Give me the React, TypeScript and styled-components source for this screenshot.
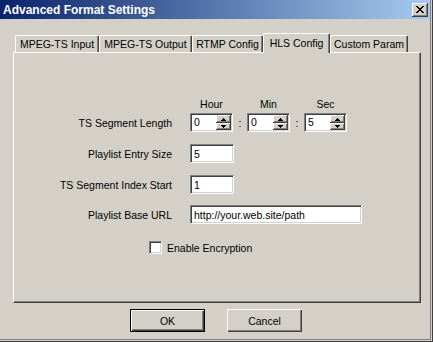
import React from 'react';
import styled, { createGlobalStyle, css } from 'styled-components';

const Global = createGlobalStyle`
  html, body { margin: 0; padding: 0; background: #d4d0c8; }
  body {
    font-family: "Liberation Sans", Arial, sans-serif;
    font-size: 10.5px;
    color: #000;
  }
  * { box-sizing: border-box; }
`;

const sunken = css`
  border: 1px solid;
  border-color: #808080 #ffffff #ffffff #808080;
  box-shadow: inset 1px 1px 0 #404040, inset -1px -1px 0 #d4d0c8;
`;

const raised = css`
  box-shadow: inset -1px -1px 0 #404040, inset 1px 1px 0 #ffffff, inset -2px -2px 0 #808080;
`;

const Window = styled.div`
  width: 433px;
  height: 342px;
  background: #d4d0c8;
  display: flex;
  flex-direction: column;
  overflow: hidden;
  box-shadow: inset -1px -1px 0 #404040, inset -2px -2px 0 #d4d0c8, inset -3px -3px 0 #808080;
`;

const TitleBar = styled.div`
  height: 19px;
  margin-right: 3px;
  background: linear-gradient(to right, #0a246a, #a6caf0);
  display: flex;
  align-items: center;
  justify-content: space-between;
  padding: 0 2px 0 3px;
`;

const TitleText = styled.span`
  color: #fff;
  font-weight: bold;
  font-size: 12px;
  font-family: "Liberation Sans", Arial, sans-serif;
  white-space: nowrap;
`;

const CloseButton = styled.div`
  width: 16px;
  height: 14px;
  background: #d4d0c8;
  ${raised};
  display: flex;
  align-items: center;
  justify-content: center;
  padding-bottom: 1px;
`;

const Content = styled.div`
  padding: 14px 0 0 13px;
`;

const TabStrip = styled.div`
  display: flex;
  align-items: flex-end;
  height: 19px;
  padding-left: 2px;
`;

const Tab = styled.div<{ $w: number; $active?: boolean }>`
  width: ${p => p.$w}px;
  height: ${p => (p.$active ? 20 : 17)}px;
  margin-bottom: ${p => (p.$active ? -1 : 0)}px;
  position: relative;
  z-index: ${p => (p.$active ? 2 : 1)};
  background: #d4d0c8;
  border-top: 1px solid #fff;
  border-left: 1px solid #fff;
  border-right: 1px solid #404040;
  border-top-left-radius: 2px;
  border-top-right-radius: 2px;
  box-shadow: inset -1px 0 0 #808080;
  display: flex;
  align-items: center;
  justify-content: center;
  white-space: nowrap;
  padding-bottom: ${p => (p.$active ? 2 : 0)}px;
`;

const Panel = styled.div`
  width: 408px;
  height: 251px;
  border-left: 1px solid #fff;
  border-top: 1px solid #fff;
  border-right: 1px solid #404040;
  border-bottom: 1px solid #404040;
  box-shadow: inset -1px -1px 0 #808080;
  padding-top: 44px;
  display: flex;
  flex-direction: column;
`;

const UnitsRow = styled.div`
  display: flex;
  height: 13px;
  align-items: center;
  margin-left: 176px;
`;

const Unit = styled.div`
  width: 43px;
  text-align: center;
`;

const Sep = styled.div`
  width: 14px;
  text-align: center;
`;

const Row = styled.div<{ $top: number }>`
  display: flex;
  align-items: center;
  height: 19px;
  margin-top: ${p => p.$top}px;
`;

const Label = styled.div`
  width: 158px;
  margin-right: 18px;
  text-align: right;
  white-space: nowrap;
`;

const Spinner = styled.div`
  width: 43px;
  height: 19px;
  background: #fff;
  ${sunken};
  display: flex;
  padding: 1px;
`;

const SpinText = styled.div`
  flex: 1;
  padding-left: 2px;
  line-height: 15px;
`;

const UpDown = styled.div`
  width: 15px;
  display: flex;
  flex-direction: column;
`;

const SpinBtn = styled.div<{ $h: number }>`
  height: ${p => p.$h}px;
  background: #d4d0c8;
  ${raised};
  display: flex;
  align-items: center;
  justify-content: center;
`;

const TextField = styled.input<{ $w: number }>`
  width: ${p => p.$w}px;
  height: 19px;
  ${sunken};
  background: #fff;
  font: inherit;
  color: #000;
  padding: 0 3px;
  outline: none;
  margin: 0;
`;

const CheckRow = styled.label`
  display: flex;
  align-items: center;
  height: 13px;
  margin-top: 17px;
  margin-left: 135px;
`;

const CheckBox = styled.span`
  width: 13px;
  height: 13px;
  background: #fff;
  ${sunken};
  margin-right: 5px;
`;

const ButtonRow = styled.div`
  width: 432px;
  display: flex;
  justify-content: center;
  gap: 22px;
  margin-top: 6px;
`;

const Button = styled.div<{ $default?: boolean }>`
  width: 75px;
  height: 23px;
  background: #d4d0c8;
  display: flex;
  align-items: center;
  justify-content: center;
  ${p =>
    p.$default
      ? css`
          border: 1px solid #000;
          box-shadow: inset 1px 1px 0 #fff, inset -1px -1px 0 #404040, inset -2px -2px 0 #808080;
        `
      : css`
          box-shadow: inset 1px 1px 0 #fff, inset -1px -1px 0 #404040, inset -2px -2px 0 #808080;
        `}
`;

const Arrow = ({ down }: { down?: boolean }) => (
  <svg width="5" height="3" viewBox="0 0 5 3" shapeRendering="crispEdges" style={{ display: 'block' }}>
    <path
      d={down ? 'M0 0h5v1h-5z M1 1h3v1h-3z M2 2h1v1h-1z' : 'M2 0h1v1h-1z M1 1h3v1h-3z M0 2h5v1h-5z'}
      fill="#000"
    />
  </svg>
);

const Spin = ({ value }: { value: string }) => (
  <Spinner>
    <SpinText>{value}</SpinText>
    <UpDown>
      <SpinBtn $h={8}>
        <Arrow />
      </SpinBtn>
      <SpinBtn $h={7}>
        <Arrow down />
      </SpinBtn>
    </UpDown>
  </Spinner>
);

const tabs = [
  { label: 'MPEG-TS Input', w: 84 },
  { label: 'MPEG-TS Output', w: 93 },
  { label: 'RTMP Config', w: 71 },
  { label: 'HLS Config', w: 67, active: true },
  { label: 'Custom Param', w: 78 },
];

export default function App() {
  return (
    <>
      <Global />
      <Window>
        <TitleBar>
          <TitleText>Advanced Format Settings</TitleText>
          <CloseButton>
            <svg width="8" height="7" viewBox="0 0 8 7" shapeRendering="crispEdges">
              <path
                d="M0 0h2v1h-2z M6 0h2v1h-2z M1 1h2v1h-2z M5 1h2v1h-2z M2 2h4v1h-4z M3 3h2v1h-2z M2 4h4v1h-4z M1 5h2v1h-2z M5 5h2v1h-2z M0 6h2v1h-2z M6 6h2v1h-2z"
                fill="#000"
              />
            </svg>
          </CloseButton>
        </TitleBar>
        <Content>
          <TabStrip>
            {tabs.map(t => (
              <Tab key={t.label} $w={t.w} $active={t.active}>
                {t.label}
              </Tab>
            ))}
          </TabStrip>
          <Panel>
            <UnitsRow>
              <Unit>Hour</Unit>
              <Sep />
              <Unit>Min</Unit>
              <Sep />
              <Unit>Sec</Unit>
            </UnitsRow>
            <Row $top={3}>
              <Label>TS Segment Length</Label>
              <Spin value="0" />
              <Sep>:</Sep>
              <Spin value="0" />
              <Sep>:</Sep>
              <Spin value="5" />
            </Row>
            <Row $top={12}>
              <Label>Playlist Entry Size</Label>
              <TextField $w={44} defaultValue="5" readOnly />
            </Row>
            <Row $top={12}>
              <Label>TS Segment Index Start</Label>
              <TextField $w={44} defaultValue="1" readOnly />
            </Row>
            <Row $top={11}>
              <Label>Playlist Base URL</Label>
              <TextField $w={172} defaultValue="http://your.web.site/path" readOnly />
            </Row>
            <CheckRow>
              <CheckBox />
              Enable Encryption
            </CheckRow>
          </Panel>
        </Content>
        <ButtonRow>
          <Button $default>OK</Button>
          <Button>Cancel</Button>
        </ButtonRow>
      </Window>
    </>
  );
}
